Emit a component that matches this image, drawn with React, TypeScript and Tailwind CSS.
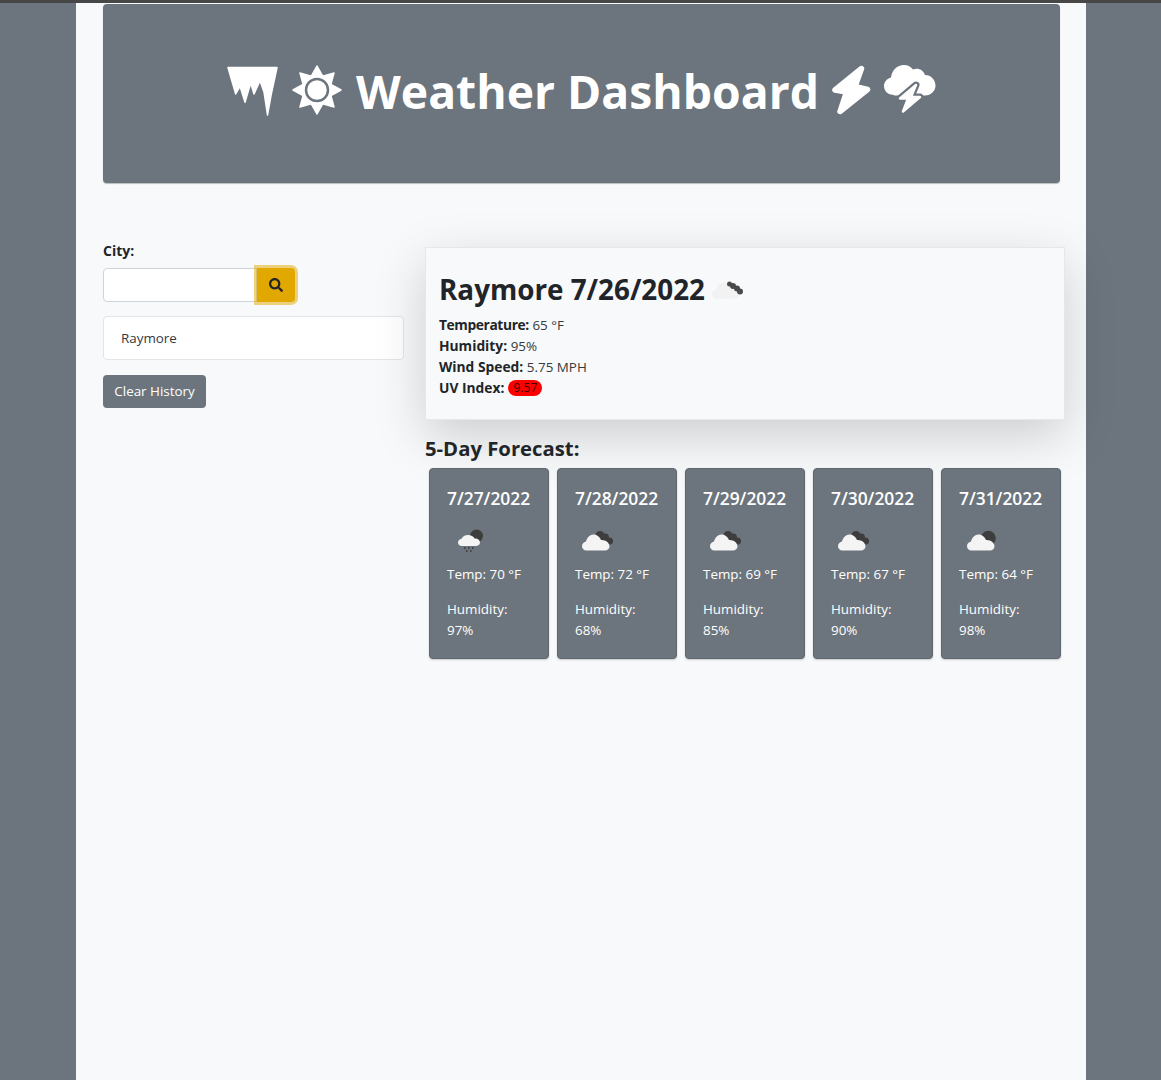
import React from "react";

const FONT = "font-['Open_Sans','Noto_Sans',sans-serif]";

function Icicles() {
  return (
    <svg width="51" height="51" viewBox="0 0 51 51" className="shrink-0">
      <path
        fill="#fff"
        stroke="#fff"
        strokeWidth="1.500"
        strokeLinejoin="round"
        d="M1 2.500H50L44 30.500L40.500 50L37 27L33 15.700L27 29L23.700 18L18 37.300L13 21.300L8.700 29Z"
      />
    </svg>
  );
}

function Sun() {
  return (
    <svg width="52" height="52" viewBox="0 0 52 52" className="shrink-0">
      <path
        fill="#fff"
        stroke="#fff"
        strokeWidth="1.500"
        strokeLinejoin="round"
        d="M26 2L31.700 12.100L43 9L39.900 20.300L50 26L39.900 31.700L43 43L31.700 39.900L26 50L20.300 39.900L9 43L12.100 31.700L2 26L12.100 20.300L9 9L20.300 12.100Z"
      />
      <circle cx="26" cy="26" r="11" fill="#fff" stroke="#6c757d" strokeWidth="2.500" />
    </svg>
  );
}

function Bolt() {
  return (
    <svg width="39" height="50" viewBox="0 0 39 50" className="shrink-0">
      <path
        fill="#fff"
        stroke="#fff"
        strokeWidth="5.500"
        strokeLinejoin="round"
        d="M29.500 3.500L3 25L14.500 27L8 46.500L35.500 24.500L23 21.500Z"
      />
    </svg>
  );
}

function CloudBolt() {
  const bolt = "M32 21L16 34.500H24L19 47.500L36 33H27Z";
  return (
    <svg width="52" height="52" viewBox="0 0 52 52" className="shrink-0">
      <path
        fill="#fff"
        d="M10 31C4 31 0 27 0 22C0 18 3 14.500 7 13.500C8 6 13 1 20 1C24 1 27 3 29 5.500C33 3.500 39 5 41 11C47 11 51.500 16 51.500 21.500C51.500 27 47 31.500 41 31.500H10Z"
      />
      <path fill="#6c757d" stroke="#6c757d" strokeWidth="7" strokeLinejoin="round" d={bolt} />
      <path fill="#fff" stroke="#fff" strokeWidth="2.500" strokeLinejoin="round" d={bolt} />
    </svg>
  );
}

function Search() {
  return (
    <svg width="14" height="14" viewBox="0 0 512 512" fill="#212529">
      <path d="M505 442.700L405.300 343c-4.500-4.500-10.600-7-17-7H372c27.600-35.300 44-79.700 44-128C416 93.100 322.900 0 208 0S0 93.100 0 208s93.100 208 208 208c48.300 0 92.700-16.400 128-44v16.300c0 6.400 2.500 12.500 7 17l99.700 99.700c9.400 9.400 24.600 9.400 33.900 0l28.300-28.300c9.400-9.400 9.400-24.600.1-34zM208 336c-70.700 0-128-57.200-128-128 0-70.700 57.200-128 128-128 70.700 0 128 57.200 128 128 0 70.700-57.200 128-128 128z" />
    </svg>
  );
}

const CLOUD =
  "M4.500 23.500C2 23.500 0 21.500 0 19.200C0 17 1.500 15 4 14.500C5 10.500 8 7.500 11.500 7.500C15 7.500 18 10 19 13C23 12.500 27.500 15.500 27.500 19.200C27.500 21.500 25.500 23.500 23 23.500Z";

function Wx({ kind }: { kind: "rain" | "broken" | "few" | "today" }) {
  if (kind === "today") {
    return (
      <svg width="36" height="28" viewBox="0 0 36 28" className="shrink-0">
        <path fill="#f2f2f2" d={CLOUD} />
        <g fill="#4a4a4a">
          <circle cx="17.500" cy="9" r="2.500" />
          <circle cx="21" cy="11" r="3" />
          <circle cx="25" cy="13.500" r="3" />
          <circle cx="28" cy="16.500" r="3" />
        </g>
      </svg>
    );
  }
  if (kind === "rain") {
    return (
      <svg width="32" height="32" viewBox="0 0 32 32" className="shrink-0">
        <circle cx="19.500" cy="11" r="6.500" fill="#3d3d3d" />
        <path
          fill="#f4f4f4"
          d="M5 21C2.500 21 1 19.500 1 17.500C1 15.500 2.500 14 4.500 13.700C5.500 11.500 8 10 11 10C14 10 16.500 11.500 17.500 13.500C20.500 13 23 15 23 17.500C23 19.500 21 21 19 21Z"
        />
        <g fill="#444">
          <rect x="7" y="22" width="1.500" height="2" />
          <rect x="11" y="22" width="1.500" height="2" />
          <rect x="15" y="22" width="1.500" height="2" />
          <rect x="9" y="25" width="1.500" height="2" />
          <rect x="13" y="25" width="1.500" height="2" />
        </g>
      </svg>
    );
  }
  return (
    <svg width="36" height="28" viewBox="0 0 36 28" className="shrink-0">
      {kind === "few" ? (
        <circle cx="21.300" cy="11.300" r="7.500" fill="#3d3d3d" />
      ) : (
        <g fill="#3d3d3d">
          <circle cx="18" cy="8.500" r="4.500" />
          <circle cx="23" cy="10.500" r="4" />
          <circle cx="27.500" cy="14" r="3.500" />
        </g>
      )}
      <path fill="#f4f4f4" d={CLOUD} />
    </svg>
  );
}

const DAYS = [
  { date: "7/27/2022", temp: "70", hum: "97", kind: "rain" as const, pad: "pl-[10px]" },
  { date: "7/28/2022", temp: "72", hum: "68", kind: "broken" as const, pad: "pl-[7px]" },
  { date: "7/29/2022", temp: "69", hum: "85", kind: "broken" as const, pad: "pl-[7px]" },
  { date: "7/30/2022", temp: "67", hum: "90", kind: "broken" as const, pad: "pl-[7px]" },
  { date: "7/31/2022", temp: "64", hum: "98", kind: "few" as const, pad: "pl-[8px]" },
];

export default function App() {
  return (
    <div className={`min-h-[1080px] bg-[#6c757d] border-t-[3px] border-[#474747] text-[#212529] ${FONT}`}>
      <div className="ml-[76px] w-[1010px] min-h-[1077px] bg-[#f8f9fa] px-[27px] pt-px">
        <header className="h-[179px] w-[957px] rounded-[4px] bg-[#6c757d] shadow-[0_1px_1px_rgba(0,0,0,0.25)] flex items-center justify-center gap-[13px] pb-[7px]">
          <Icicles />
          <Sun />
          <h1 className="mt-[4px] text-[46.3px] leading-[54px] font-bold text-white whitespace-nowrap">Weather Dashboard</h1>
          <Bolt />
          <CloudBolt />
        </header>

        <div className="flex mt-[64px] gap-[21px]">
          <aside className="w-[301px] shrink-0">
            <label className="block text-[14px] leading-[21px] font-bold mt-[-7px]">City:</label>
            <div className="mt-[7px] flex">
              <input className="w-[154px] h-[34px] bg-white border border-[#ced4da] rounded-l-[4px] outline-none" />
              <button className="w-[38px] h-[34px] bg-[#e0a800] rounded-r-[4px] flex items-center justify-center shadow-[0_0_0_3px_rgba(224,168,0,0.5)]">
                <Search />
              </button>
            </div>
            <div className="mt-[14px] h-[44px] bg-white border border-[#e5e5e5] rounded-[4px] flex items-center pl-[17px] text-[13.4px] text-[#343a40]">
              Raymore
            </div>
            <button className="mt-[15px] h-[33px] w-[103px] bg-[#6c757d] rounded-[4px] text-white text-[13.4px] flex items-center justify-center">
              Clear History
            </button>
          </aside>

          <main className="w-[640px] shrink-0">
            <section className="h-[173px] bg-[#f8f9fa] border border-[#e6e7e8] shadow-[0_16px_48px_rgba(0,0,0,0.175)] pl-[13px] pt-[21px]">
              <div className="flex items-center gap-[7px] h-[40px]">
                <h2 className="text-[27.8px] leading-[40px] font-bold whitespace-nowrap">Raymore 7/26/2022</h2>
                <Wx kind="today" />
              </div>
              <div className="mt-[5px] text-[13.8px] leading-[21px]">
                <p className="h-[21px]"><b className="font-bold tracking-[-0.4px]">Temperature:</b> <span className="text-[13.4px] leading-none text-[#343a40]">65 °F</span></p>
                <p className="h-[21px]"><b className="font-bold">Humidity:</b> <span className="text-[13.4px] leading-none text-[#343a40]">95%</span></p>
                <p className="h-[21px]"><b className="font-bold">Wind Speed:</b> <span className="text-[13.4px] leading-none text-[#343a40]">5.75 MPH</span></p>
                <p className="h-[21px] flex items-center gap-[4px]">
                  <b className="font-bold">UV Index:</b>
                  <span className="w-[34px] h-[16px] rounded-full bg-[#ff0000] text-[12px] leading-[16px] text-center text-[#3a0000]">9.57</span>
                </p>
              </div>
            </section>

            <h3 className="mt-[14px] text-[20.3px] leading-[28px] font-bold whitespace-nowrap">5-Day Forecast:</h3>

            <div className="mt-[6px] ml-[4px] flex gap-2">
              {DAYS.map((d) => (
                <article
                  key={d.date}
                  className="w-[120px] h-[191px] shrink-0 rounded-[4px] bg-[#6c757d] border border-[#5f676e] shadow-[0_1px_2px_rgba(0,0,0,0.2)] text-white pl-[17px] pt-[16px] text-[13.4px] leading-[21px]"
                >
                  <div className="text-[17.4px] leading-[26px] font-semibold whitespace-nowrap">{d.date}</div>
                  <div className={`h-[38px] mt-[11px] flex items-center ${d.pad}`}>
                    <Wx kind={d.kind} />
                  </div>
                  <p className="mt-[4px]">Temp: {d.temp} °F</p>
                  <p className="mt-[14px]">Humidity:<br />{d.hum}%</p>
                </article>
              ))}
            </div>
          </main>
        </div>
      </div>
    </div>
  );
}
